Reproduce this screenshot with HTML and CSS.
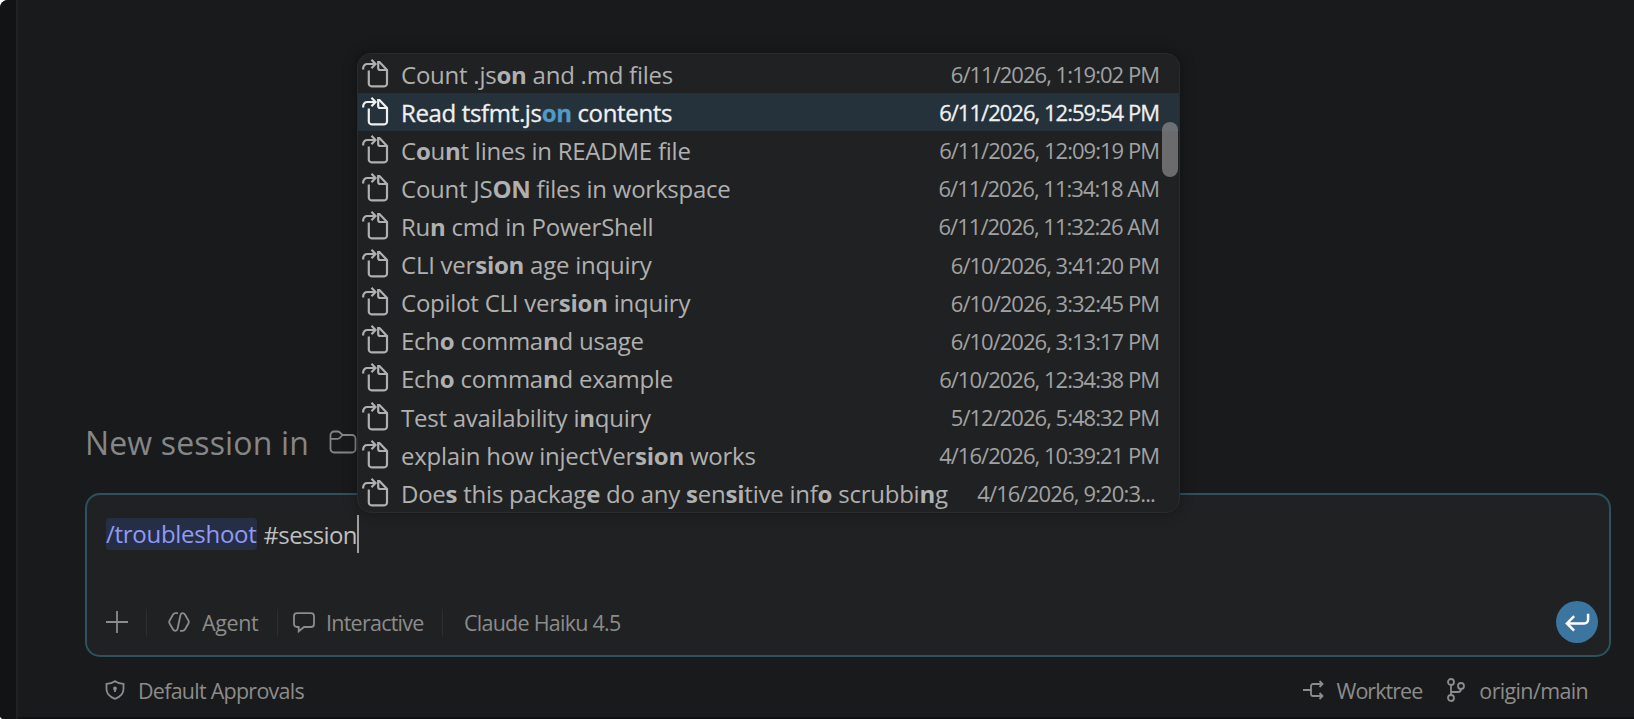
FILE: index.html
```html
<!DOCTYPE html>
<html lang="en">
<head>
  <meta charset="UTF-8">
  <title>New session</title>
  <link rel="stylesheet" href="styles.css">
</head>
<body>
  <svg width="0" height="0" class="defs">
    <symbol id="session" viewBox="0 0 28 30">
      <path d="M1.200 11.500V10A4 4 0 0 1 5.200 6H13M9.500 1.800L13.500 6L9.500 10.200"/>
      <path d="M6.800 12.500V25.500a2.800 2.800 0 0 0 2.800 2.800H22.200a2.800 2.800 0 0 0 2.800-2.800V12L17.500 4H16.200V10a2 2 0 0 0 2 2H25"/>
    </symbol>
  </svg>

  <div class="window">
    <div class="sidebar"></div>
    <main class="main">
      <div class="heading">
        <span>New session in</span>
        <svg class="icon folder" viewBox="0 0 28 24"><path d="M1.500 19V5a3.500 3.500 0 0 1 3.500-3.500H8.500c1 0 1.700.3 2.300.9L13.500 5H23a3.500 3.500 0 0 1 3.500 3.500V19a3.500 3.500 0 0 1-3.500 3.500H5A3.500 3.500 0 0 1 1.500 19zM1.500 8.800H8.500c1 0 1.700-.3 2.300-.9L13.500 5"/></svg>
      </div>

      <div class="input-box">
        <div class="editor"><span class="command">/troubleshoot</span><span class="variable">#session</span><span class="cursor"></span></div>
        <div class="toolbar">
          <svg class="icon plus" viewBox="0 0 22 22"><path d="M11 0V22M0 11H22"/></svg>
          <span class="divider"></span>
          <svg class="icon agent" viewBox="0 0 22 20"><path d="M10 1.200H7.500C6.300 1.200 5.500 1.800 4.900 2.800L1.500 8.700C1 9.600 1 10.400 1.500 11.300L4.900 17.200c.6 1 1.300 1.600 2.500 1.600S9.200 18.200 9.500 17L12.500 3c.3-1.200 1-1.800 2.100-1.800s1.900.6 2.500 1.600L20.500 8.700c.5.900.5 1.700 0 2.600L17.100 17.200c-.6 1-1.400 1.600-2.600 1.600H12"/></svg>
          <span class="agent-label">Agent</span>
          <span class="divider"></span>
          <svg class="icon chat" viewBox="0 0 22 21"><path d="M4 1.200H18A3 3 0 0 1 21 4.200V12a3 3 0 0 1-3 3H11L5.700 19.300V15H4a3 3 0 0 1-3-3V4.200A3 3 0 0 1 4 1.200z"/></svg>
          <span class="mode-label">Interactive</span>
          <span class="divider"></span>
          <span class="model-label">Claude Haiku 4.5</span>
          <button class="send" aria-label="Send">
            <svg class="icon" viewBox="0 0 26 20"><path d="M24 1.500V7.500a4 4 0 0 1-4 4H2M9.500 4L2 11.500L9.500 19"/></svg>
          </button>
        </div>
      </div>

      <div class="status">
        <svg class="icon shield" viewBox="0 0 20 20"><path d="M10 1.200C7.500 3 4.800 3.700 1.500 3.800V9c0 4.500 3 7.800 8.500 9.800c5.500-2 8.500-5.300 8.500-9.800V3.800C15.200 3.700 12.500 3 10 1.200z"/><circle cx="10" cy="8.500" r="1"/><path d="M10 9V12"/></svg>
        <span class="approvals">Default Approvals</span>
        <svg class="icon worktree" viewBox="0 0 21 20"><path d="M0 10H8M19 4H10A2 2 0 0 0 8 6V14a2 2 0 0 0 2 2H19M16.500 1L19.500 4L16.500 7M16.500 13L19.500 16L16.500 19"/></svg>
        <span class="worktree-label">Worktree</span>
        <svg class="icon branch" viewBox="0 0 19 24"><circle cx="5" cy="4" r="3"/><circle cx="5" cy="20" r="3"/><circle cx="15" cy="8" r="3"/><path d="M5 7V17M15 11c0 2-1 3-3 3H5"/></svg>
        <span class="branch-label">origin/main</span>
      </div>
    </main>

    <div class="suggest">
      <div class="row"><svg class="icon"><use href="#session"/></svg><span class="label">Count .js<b>on</b> and .md files</span><span class="date">6/11/2026, 1:19:02 PM</span></div>
      <div class="row selected"><svg class="icon"><use href="#session"/></svg><span class="label">Read tsfmt.js<b>on</b> contents</span><span class="date">6/11/2026, 12:59:54 PM</span></div>
      <div class="row"><svg class="icon"><use href="#session"/></svg><span class="label">C<b>o</b>u<b>n</b>t lines in README file</span><span class="date">6/11/2026, 12:09:19 PM</span></div>
      <div class="row"><svg class="icon"><use href="#session"/></svg><span class="label">Count JS<b>ON</b> files in workspace</span><span class="date">6/11/2026, 11:34:18 AM</span></div>
      <div class="row"><svg class="icon"><use href="#session"/></svg><span class="label">Ru<b>n</b> cmd in PowerShell</span><span class="date">6/11/2026, 11:32:26 AM</span></div>
      <div class="row"><svg class="icon"><use href="#session"/></svg><span class="label">CLI ver<b>sion</b> age inquiry</span><span class="date">6/10/2026, 3:41:20 PM</span></div>
      <div class="row"><svg class="icon"><use href="#session"/></svg><span class="label">Copilot CLI ver<b>sion</b> inquiry</span><span class="date">6/10/2026, 3:32:45 PM</span></div>
      <div class="row"><svg class="icon"><use href="#session"/></svg><span class="label">Ech<b>o</b> comma<b>n</b>d usage</span><span class="date">6/10/2026, 3:13:17 PM</span></div>
      <div class="row"><svg class="icon"><use href="#session"/></svg><span class="label">Ech<b>o</b> comma<b>n</b>d example</span><span class="date">6/10/2026, 12:34:38 PM</span></div>
      <div class="row"><svg class="icon"><use href="#session"/></svg><span class="label">Test availability i<b>n</b>quiry</span><span class="date">5/12/2026, 5:48:32 PM</span></div>
      <div class="row"><svg class="icon"><use href="#session"/></svg><span class="label">explain how injectVer<b>sion</b> works</span><span class="date">4/16/2026, 10:39:21 PM</span></div>
      <div class="row"><svg class="icon"><use href="#session"/></svg><span class="label">Doe<b>s</b> this packag<b>e</b> do any <b>s</b>en<b>si</b>tive inf<b>o</b> scrubbi<b>n</b>g</span><span class="date cut">4/16/2026, 9:20:3...</span></div>
      <div class="scrollbar"></div>
    </div>
  </div>
</body>
</html>
```
FILE: styles.css
```css
* {
  box-sizing: border-box;
}
body {
  margin: 0;
  background: #fff;
  font-family: "Open Sans", "Noto Sans", sans-serif;
}
.defs {
  position: absolute;
}
.window {
  position: relative;
  display: flex;
  width: 1634px;
  height: 719px;
  border-radius: 8px 0 0 4px;
  overflow: hidden;
  background: #191a1b;
  color: #8c8c8c;
}
.sidebar {
  width: 18px;
  background: #121314;
  border-right: 2px solid #202122;
}
.main {
  flex: 1;
  padding: 415px 23px 0 67px;
  border-bottom: 2px solid #121014;
}
.icon {
  flex: none;
  fill: none;
  stroke: currentColor;
  stroke-width: 1.8;
  overflow: visible;
}
.heading {
  display: flex;
  align-items: center;
  height: 54px;
  font-size: 32px;
  letter-spacing: 0.15px;
  color: #858687;
  white-space: nowrap;
}
.folder {
  width: 28px;
  height: 24px;
  margin-left: 20px;
}
.input-box {
  height: 164px;
  margin-top: 24px;
  padding: 22px 11px 0 19px;
  border: 2px solid #2f5061;
  border-radius: 15px;
  background: #202122;
}
.editor {
  display: flex;
  align-items: center;
  height: 34px;
  font-size: 24px;
  letter-spacing: -0.28px;
  color: #bfbfbf;
}
.command {
  line-height: 32px;
  border-radius: 4px;
  background: #262e46;
  color: #8f9bf5;
}
.variable {
  margin-left: 7px;
  letter-spacing: -0.65px;
}
.cursor {
  width: 2px;
  height: 38px;
  background: #a0a0a0;
}
.toolbar {
  display: flex;
  align-items: center;
  height: 42px;
  margin-top: 50px;
  font-size: 21.5px;
  letter-spacing: -0.75px;
}
.plus {
  width: 22px;
  height: 22px;
}
.divider {
  width: 1px;
  height: 27px;
  background: #2e2f30;
}
.plus + .divider {
  margin-left: 18px;
}
.agent {
  width: 22px;
  height: 20px;
  margin-left: 21px;
}
.agent-label {
  width: 75px;
  margin-left: 12px;
  letter-spacing: -0.4px;
}
.chat {
  width: 22px;
  height: 21px;
  margin-left: 15px;
}
.mode-label {
  width: 116px;
  margin-left: 11px;
}
.model-label {
  margin-left: 21px;
}
.send {
  display: flex;
  align-items: center;
  justify-content: center;
  width: 42px;
  height: 42px;
  margin-left: auto;
  padding: 0;
  border: none;
  border-radius: 50%;
  background: #3b76a0;
  color: #fff;
}
.send .icon {
  width: 25px;
  height: 20px;
  stroke-width: 2.6;
}
.status {
  display: flex;
  align-items: center;
  height: 36px;
  margin-top: 15px;
  padding: 0 23px 0 20px;
  font-size: 21.5px;
  letter-spacing: -0.75px;
}
.shield {
  width: 20px;
  height: 20px;
}
.approvals {
  margin: 0 auto 0 13px;
}
.worktree {
  width: 21px;
  height: 20px;
}
.worktree-label {
  margin-left: 12px;
  letter-spacing: -0.95px;
}
.branch {
  width: 19px;
  height: 24px;
  margin-left: 24px;
}
.branch-label {
  margin-left: 14px;
  letter-spacing: -0.65px;
}

/* session picker over the input */
.suggest {
  position: absolute;
  left: 357px;
  top: 53px;
  width: 823px;
  height: 460px;
  padding-top: 0.5px;
  border: 1px solid #2a2b2c;
  border-radius: 14px;
  background: #202122;
  box-shadow: 0 0 14px rgba(0, 0, 0, 0.35);
  overflow: hidden;
}
.row {
  display: flex;
  align-items: center;
  height: 38.12px;
  padding: 0 20px 0 4px;
  color: #b0b0b0;
  white-space: nowrap;
}
.row .icon {
  width: 28px;
  height: 30px;
  margin-bottom: 2px;
  stroke-width: 2.2;
}
.label {
  flex: 1;
  margin-left: 11px;
  padding-top: 1px;
  font-size: 24px;
  letter-spacing: -0.24px;
}
.date {
  padding-top: 1px;
  font-size: 22px;
  letter-spacing: -0.98px;
  color: #a2a2a2;
}
.cut {
  padding-right: 4px;
  letter-spacing: -0.85px;
}
.selected,
.selected .date {
  background: #25323b;
  color: #f0f0f0;
}
.selected {
  -webkit-text-stroke: 0.3px;
}
.selected .label {
  letter-spacing: -0.35px;
}
.selected b {
  color: #5498c6;
}
.scrollbar {
  position: absolute;
  right: 1px;
  top: 68px;
  width: 16px;
  height: 55px;
  border-radius: 8px;
  background: rgba(140, 140, 142, 0.7);
}
```
